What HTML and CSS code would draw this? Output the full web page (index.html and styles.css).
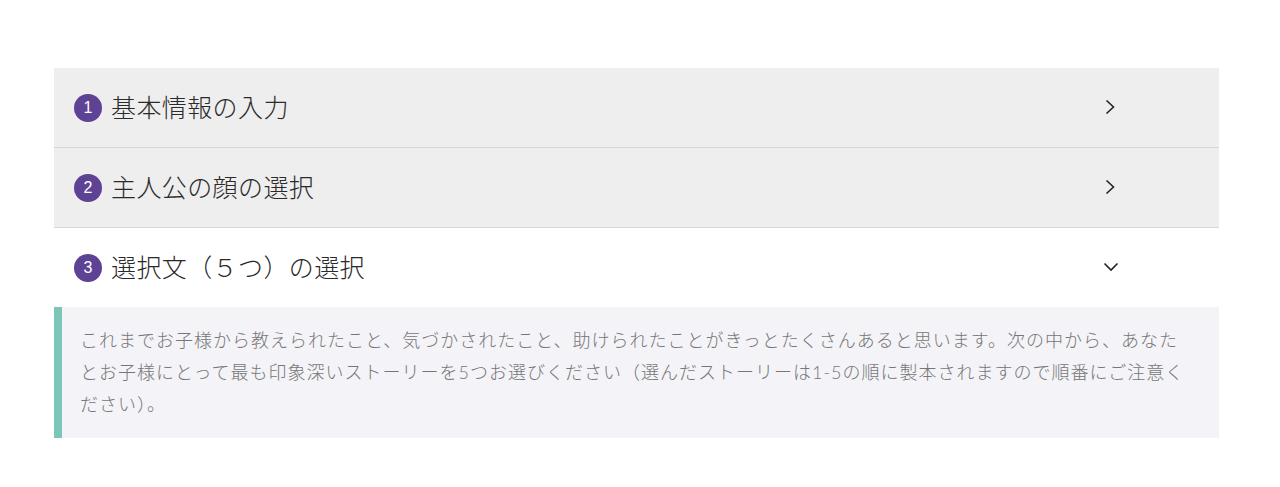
FILE: index.html
```html
<!DOCTYPE html>
<html lang="ja">
<head>
<meta charset="utf-8">
<link rel="stylesheet" href="styles.css">
</head>
<body>
<div class="page">
  <div class="accordion">
    <div class="item closed">
      <div class="head">
        <span class="num">1</span>
        <span class="title">基本情報の入力</span>
        <svg class="chev" width="16" height="16" viewBox="0 0 16 16"><path d="M3.5 1.5 L10.5 8 L3.5 14.5" fill="none" stroke="#222" stroke-width="1.6"/></svg>
      </div>
    </div>
    <div class="item closed">
      <div class="head">
        <span class="num">2</span>
        <span class="title">主人公の顔の選択</span>
        <svg class="chev" width="16" height="16" viewBox="0 0 16 16"><path d="M3.5 1.5 L10.5 8 L3.5 14.5" fill="none" stroke="#222" stroke-width="1.6"/></svg>
      </div>
    </div>
    <div class="item open">
      <div class="head">
        <span class="num">3</span>
        <span class="title">選択文（５つ）の選択</span>
        <svg class="chev" width="16" height="16" viewBox="0 0 16 16"><path d="M1.5 4.5 L8 11 L14.5 4.5" fill="none" stroke="#222" stroke-width="1.6"/></svg>
      </div>
      <div class="desc">
        <p>これまでお子様から教えられたこと、気づかされたこと、助けられたことがきっとたくさんあると思います。次の中から、あなたとお子様にとって最も印象深いストーリーを5つお選びください（選んだストーリーは1-5の順に製本されますので順番にご注意ください）。</p>
      </div>
    </div>
  </div>
</div>
</body>
</html>
```

FILE: styles.css
```css
html, body {
  margin: 0;
  padding: 0;
  background: #ffffff;
}
body {
  font-family: "Lato", "Noto Sans CJK JP", sans-serif;
}
.page {
  padding: 68px 61px 0 54px;
}
.accordion {
  width: 1165px;
}
.item.closed {
  background: #eeeeee;
  border-bottom: 1px solid #d6d6d6;
}
.head {
  display: flex;
  align-items: center;
  height: 79px;
  padding-left: 20px;
  padding-right: 100px;
}
.num {
  width: 28px;
  height: 28px;
  border-radius: 50%;
  background: #5e4294;
  color: #ffffff;
  font-family: "Liberation Sans", sans-serif;
  font-size: 16px;
  display: flex;
  align-items: center;
  justify-content: center;
  flex: none;
}
.title {
  margin-left: 9px;
  font-family: "Noto Sans CJK JP", sans-serif;
  font-weight: 300;
  font-size: 25px;
  line-height: 30px;
  letter-spacing: 0.4px;
  color: #2a2a2a;
  flex: 1;
  position: relative;
  top: -2px;
}
.chev {
  flex: none;
  position: relative;
  top: -1px;
}
.desc {
  background: #f4f3f8;
  border-left: 8px solid #7dc4b9;
  padding: 17px 25px 18px 18px;
}
.desc p {
  margin: 0;
  font-family: "Lato", "Noto Sans CJK JP", sans-serif;
  font-weight: 300;
  font-size: 18px;
  letter-spacing: 1px;
  line-height: 32px;
  color: #767676;
}
```
